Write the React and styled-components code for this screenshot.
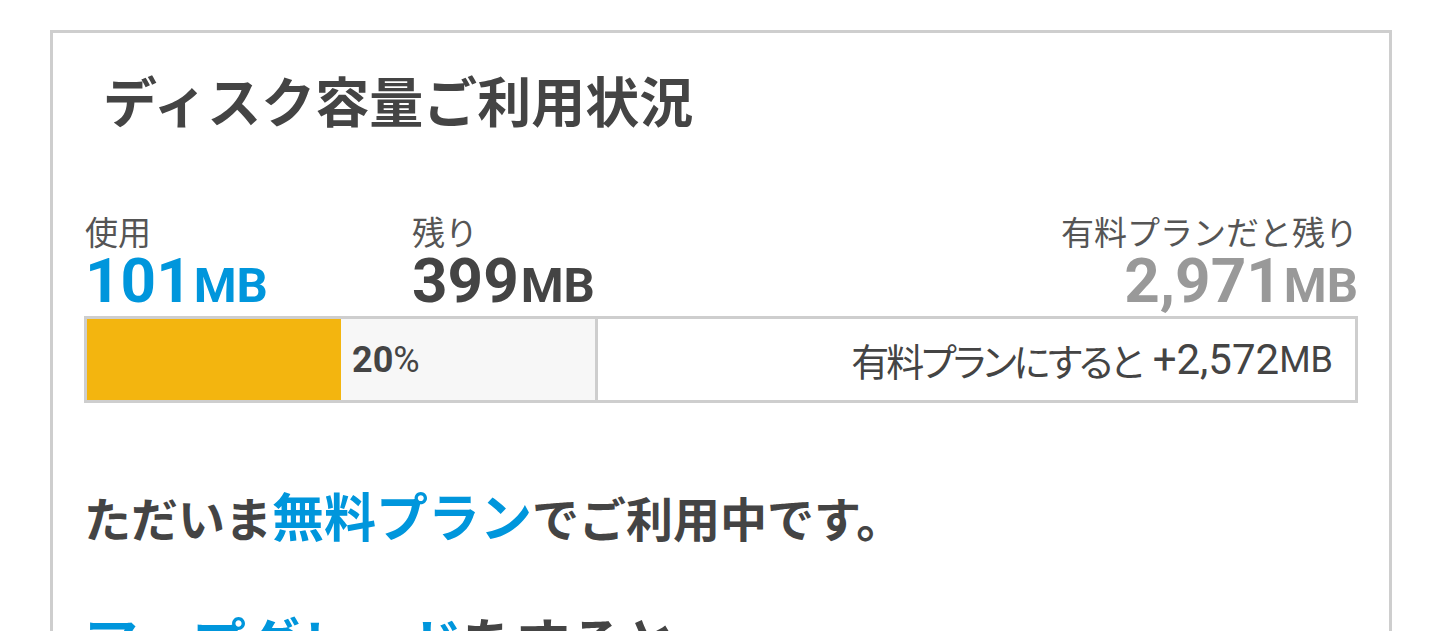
import React from "react";
import styled, { createGlobalStyle } from "styled-components";

const GlobalStyle = createGlobalStyle`
  html, body { margin: 0; padding: 0; background: #fff; }
  body { font-family: "Noto Sans CJK JP", sans-serif; color: #444; }
`;

const BLUE = "#0096dc";
const JP = `"Noto Sans CJK JP", sans-serif`;
const NUM = `Roboto, "Noto Sans CJK JP", sans-serif`;

const Page = styled.div`
  padding: 30px 48px 0 50px;
  height: 631px;
  box-sizing: border-box;
  overflow: hidden;
`;

const Card = styled.section`
  border: 3px solid #cecece;
  border-bottom: none;
  padding: 26px 31px 40px 31px;
  min-height: 700px;
  box-sizing: border-box;
`;

const Title = styled.h2`
  margin: 0;
  padding-left: 19px;
  font-family: ${JP};
  font-weight: 700;
  font-size: 54px;
  line-height: 81px;
  color: #444;
`;

const Stats = styled.div`
  display: grid;
  grid-template-columns: 327px 1fr auto;
  margin-top: 71px;
  padding-left: 1px;
`;

const Stat = styled.div`
  display: flex;
  flex-direction: column;
  align-items: ${(p) => (p.$right ? "flex-end" : "flex-start")};
`;

const Label = styled.div`
  font-family: ${JP};
  font-size: 33px;
  line-height: 40px;
  color: #555;
`;

const Value = styled.div`
  font-family: ${NUM};
  font-weight: 700;
  font-size: 62px;
  line-height: 60px;
  color: ${(p) => p.$color};
  white-space: nowrap;
`;

const Unit = styled.span`
  font-size: 49px;
  margin-left: 2px;
`;

const Bar = styled.div`
  display: flex;
  margin-top: 0;
  height: 87px;
  box-sizing: border-box;
  border: 3px solid #cecece;
`;

const FreeSegment = styled.div`
  flex: 0 0 40.3%;
  box-sizing: border-box;
  display: flex;
  align-items: center;
  background: #f7f7f7;
  border-right: 3px solid #cecece;
`;

const Fill = styled.div`
  align-self: stretch;
  background: #f3b50f;
`;

const Percent = styled.div`
  margin-left: 11px;
  font-family: ${NUM};
  font-size: 36px;
  color: #444;
  b { font-weight: 700; }
`;

const PaidSegment = styled.div`
  flex: 1;
  display: flex;
  align-items: center;
  justify-content: flex-end;
  padding-right: 22px;
  background: #fff;
  color: #444;
  white-space: nowrap;
`;

const PaidJp = styled.span`
  font-family: ${JP};
  font-size: 38px;
  letter-spacing: -3px;
  font-feature-settings: "palt";
  margin-right: 12px;
`;

const PaidNum = styled.span`
  font-family: ${NUM};
  font-size: 42px;
`;

const PaidUnit = styled.span`
  font-family: ${NUM};
  font-size: 36px;
`;

const Message = styled.p`
  margin: 76px 0 0;
  font-family: ${JP};
  font-weight: 700;
  font-size: 47px;
  line-height: 72px;
  color: #444;
`;

const Upgrade = styled.p`
  margin: 47px 0 0;
  font-family: ${JP};
  font-weight: 700;
  font-size: 54px;
  line-height: 81px;
  color: #444;
`;

const Em = styled.span`
  color: ${BLUE};
  font-size: ${(p) => (p.$size ? `${p.$size}px` : "inherit")};
`;

export default function App() {
  const usedPct = 20;
  return (
    <>
      <GlobalStyle />
      <Page>
        <Card>
          <Title>ディスク容量ご利用状況</Title>
          <Stats>
            <Stat>
              <Label>使用</Label>
              <Value $color={BLUE}>
                101<Unit>MB</Unit>
              </Value>
            </Stat>
            <Stat>
              <Label>残り</Label>
              <Value $color="#444">
                399<Unit>MB</Unit>
              </Value>
            </Stat>
            <Stat $right>
              <Label>有料プランだと残り</Label>
              <Value $color="#999">
                2,971<Unit>MB</Unit>
              </Value>
            </Stat>
          </Stats>
          <Bar>
            <FreeSegment>
              <Fill style={{ width: `${usedPct * 2.5}%` }} />
              <Percent>
                <b>{usedPct}</b>%
              </Percent>
            </FreeSegment>
            <PaidSegment>
              <PaidJp>有料プランにすると</PaidJp>
              <PaidNum>+2,572</PaidNum>
              <PaidUnit>MB</PaidUnit>
            </PaidSegment>
          </Bar>
          <Message>
            ただいま<Em $size={52}>無料プラン</Em>でご利用中です。
          </Message>
          <Upgrade>
            <Em>アップグレード</Em>をすると
          </Upgrade>
        </Card>
      </Page>
    </>
  );
}
